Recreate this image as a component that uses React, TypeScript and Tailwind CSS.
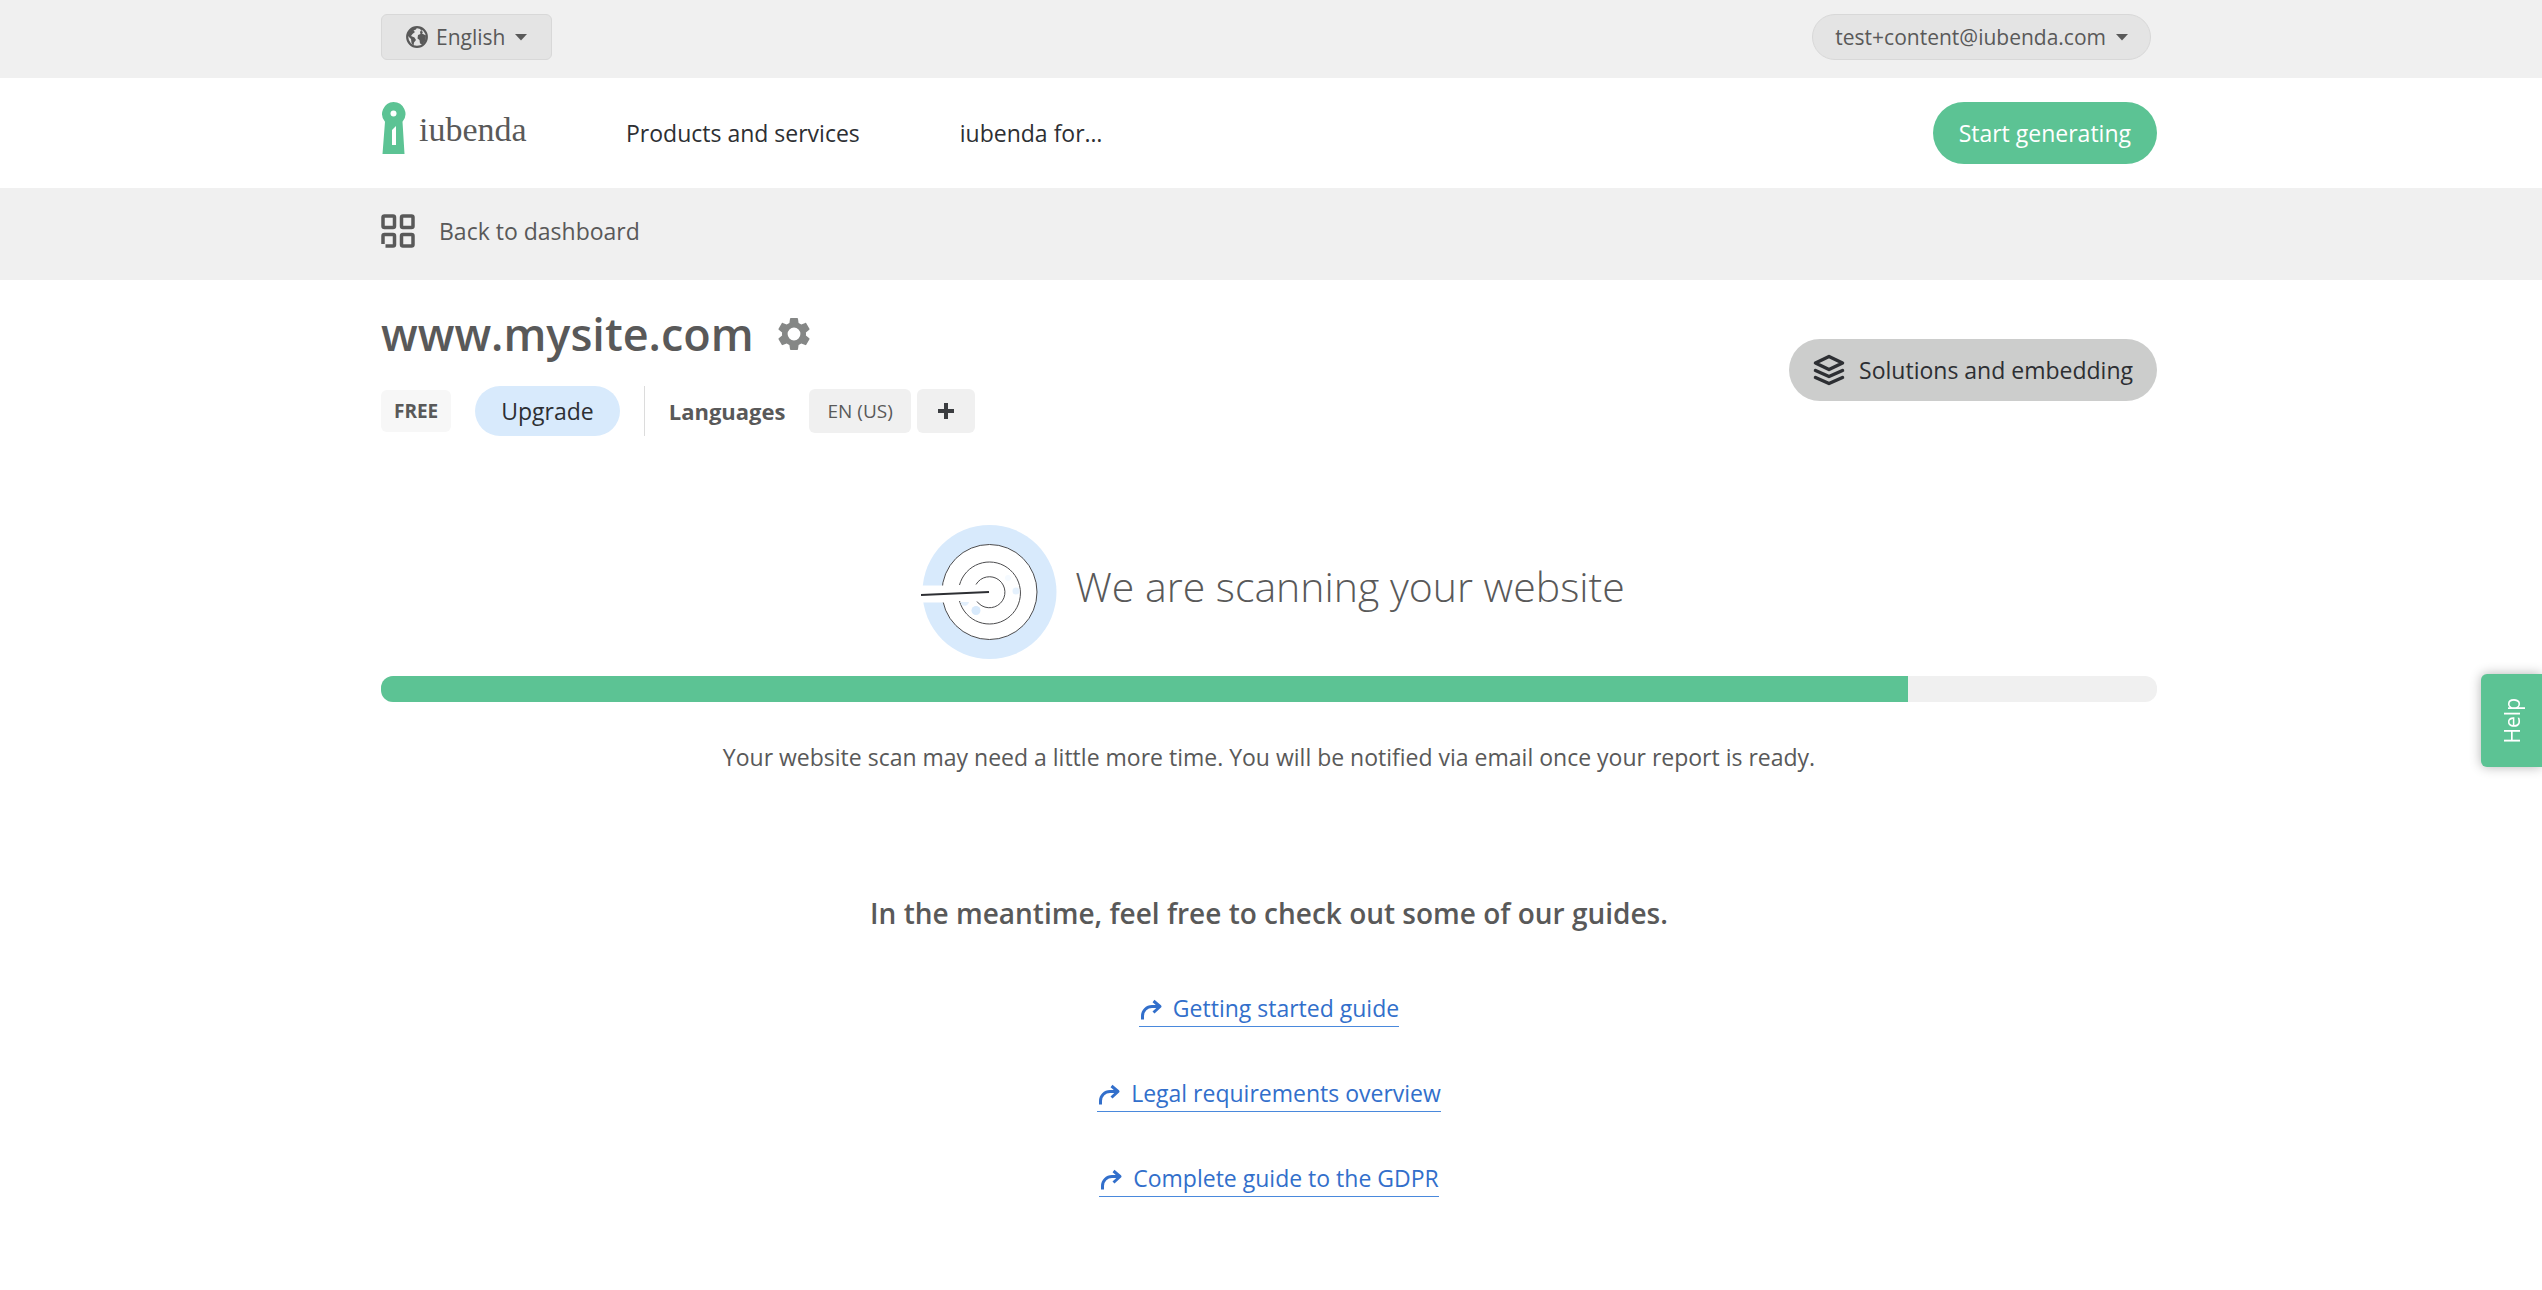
import type { ReactNode } from 'react';

const GUIDES = ['Getting started guide', 'Legal requirements overview', 'Complete guide to the GDPR'];
const SCAN_PROGRESS = 86;

function App() {
  return (
    <div className="min-h-screen bg-white font-['Open_Sans','Noto_Sans',sans-serif] text-[23px] leading-[30px] text-[#595959]">
      <div className="bg-[#f0f0f0]">
        <Container className="flex h-[78px] items-start justify-between pt-3.5">
          <button
            type="button"
            className="flex h-[46px] items-center rounded-md border border-[#d8d8d8] bg-[#e4e4e4] px-6 text-[21px]"
          >
            <GlobeIcon />
            English
            <Caret />
          </button>
          <button
            type="button"
            className="mr-1.5 flex h-[46px] items-center rounded-full border border-[#d8d8d8] bg-[#e4e4e4] px-[22px] text-[21px]"
          >
            test+content@iubenda.com
            <Caret />
          </button>
        </Container>
      </div>

      <header>
        <Container className="flex h-[110px] items-center">
          <a href="#" className="flex w-[245px] items-center pb-2.5">
            <KeyholeLogo />
            <span className="ml-3 pt-1 font-['Liberation_Serif',serif] text-[34px] leading-[40px]">iubenda</span>
          </a>
          <nav className="flex flex-1 gap-[100px] text-[#2d2f33]">
            <a href="#">Products and services</a>
            <a href="#">iubenda for…</a>
          </nav>
          <button type="button" className="h-[62px] rounded-full bg-[#5cc394] px-[26px] text-white">
            Start generating
          </button>
        </Container>
      </header>

      <div className="bg-[#f0f0f0]">
        <Container className="flex h-[92px] items-center pb-1.5">
          <a href="#" className="flex items-center gap-6">
            <DashboardIcon />
            Back to dashboard
          </a>
        </Container>
      </div>

      <main>
        <Container>
          <section className="flex items-start justify-between pt-6">
            <div>
              <div className="flex items-center gap-6">
                <h1 className="text-[45px] leading-[60px] font-semibold">www.mysite.com</h1>
                <button type="button" aria-label="Site settings">
                  <GearIcon />
                </button>
              </div>
              <div className="mt-[22px] flex items-center">
                <span className="rounded-md bg-[#f7f7f7] px-[13px] py-1.5 text-[19px] leading-[30px] font-bold">
                  FREE
                </span>
                <button type="button" className="ml-6 h-[50px] rounded-full bg-[#d8eafc] px-[26px] text-[#2d2f33]">
                  Upgrade
                </button>
                <div className="ml-6 flex h-[50px] items-center border-l border-[#dcdcdc] pl-6">
                  <span className="text-[22px] font-bold">Languages</span>
                  <button type="button" className="ml-6 h-11 rounded-md bg-[#f0f0f0] px-[18px] text-[19px]">
                    EN (US)
                  </button>
                  <button
                    type="button"
                    aria-label="Add language"
                    className="ml-1.5 flex h-11 w-[58px] items-center justify-center rounded-md bg-[#f0f0f0]"
                  >
                    <PlusIcon />
                  </button>
                </div>
              </div>
            </div>
            <button
              type="button"
              className="mt-[35px] flex h-[62px] items-center gap-3.5 rounded-full bg-[#cccdcc] px-6 text-[#2d2f33]"
            >
              <LayersIcon />
              Solutions and embedding
            </button>
          </section>

          <section className="mt-[88px] text-center">
            <div className="flex items-center justify-center gap-[18px] pl-2">
              <TargetIllustration />
              <h2 className="pb-3 text-[41px] leading-[56px] font-light">We are scanning your website</h2>
            </div>
            <div
              role="progressbar"
              aria-label="Website scan"
              aria-valuenow={SCAN_PROGRESS}
              className="mt-4 h-[26px] overflow-hidden rounded-[12px] bg-[#f0f0f0]"
            >
              <div className="h-full bg-[#5cc394]" style={{ width: `${SCAN_PROGRESS}%` }} />
            </div>
            <p className="mt-10">
              Your website scan may need a little more time. You will be notified via email once your report is ready.
            </p>
          </section>

          <section className="mt-[121px] text-center">
            <h3 className="text-[28px] leading-[40px] font-semibold">
              In the meantime, feel free to check out some of our guides.
            </h3>
            <ul className="mt-[60px] flex flex-col items-center gap-[51px]">
              {GUIDES.map((guide) => (
                <li key={guide}>
                  <a href="#" className="flex h-[34px] items-start gap-2.5 border-b border-[#4a89dc] text-[#326fcb]">
                    <ArrowIcon />
                    {guide}
                  </a>
                </li>
              ))}
            </ul>
          </section>
        </Container>
      </main>

      <button
        type="button"
        className="fixed top-[674px] right-0 flex h-[93px] w-[61px] items-center justify-center rounded-l-md bg-[#5cc394] text-[21px] text-white shadow-[0_0_12px_rgba(0,0,0,0.3)]"
      >
        <span className="rotate-180 [writing-mode:vertical-rl]">Help</span>
      </button>
    </div>
  );
}

function Container({ className = '', children }: { className?: string; children: ReactNode }) {
  return (
    <div className="pr-1">
      <div className={`mx-auto max-w-[1776px] ${className}`}>{children}</div>
    </div>
  );
}

function Caret() {
  return (
    <svg viewBox="0 0 12 7" className="ml-2.5 h-[7px] w-3" fill="currentColor">
      <path d="M0 0h12L6 6.500z" />
    </svg>
  );
}

function GlobeIcon() {
  return (
    <svg viewBox="0 0 22 22" className="mr-2 size-[22px]" fill="currentColor">
      <circle cx="11" cy="11" r="9.800" fill="none" stroke="currentColor" strokeWidth="2.200" />
      <path d="M2 7.500L6 2.500l5-1.500-1 2.500-2.500 1L9 6 6.500 8 5 10l3.500 1.500 1.500 2.500-2 2.500-.5 3.500L5.500 17 5 13 2 10z" />
      <path d="M13.500 1.500l2.500 2-.5 1.500 1.500 1-1 1.500 4 2-.5 5-3 4-2.500-1-.5-3.500-2-1.500.5-3.500L14.500 8l-.5-2 1-1.500z" />
    </svg>
  );
}

function KeyholeLogo() {
  return (
    <svg viewBox="0 0 26 52" className="h-[52px] w-[26px]">
      <path d="M12.500 0a12 12 0 0 1 9 19.800L23.500 52h-22L4 19.800A12 12 0 0 1 12.500 0z" fill="#5cc394" />
      <circle cx="12.500" cy="11.500" r="3" fill="#fff" />
      <path d="M15 24v19h-4V28z" fill="#fff" />
    </svg>
  );
}

function DashboardIcon() {
  return (
    <svg viewBox="0 0 34 34" className="size-[34px]" fill="none" stroke="currentColor" strokeWidth="3.500">
      <rect x="2" y="2" width="11.500" height="11.500" rx="1.500" />
      <rect x="20.500" y="2" width="11.500" height="11.500" rx="1.500" />
      <rect x="20.500" y="20.500" width="11.500" height="11.500" rx="1.500" />
      <path d="M2 30v-8a1.500 1.500 0 0 1 1.500-1.500H12a1.500 1.500 0 0 1 1.500 1.500v8.500A1.500 1.500 0 0 1 12 32H4.500" />
    </svg>
  );
}

function GearIcon() {
  return (
    <svg viewBox="2 2 20 20" className="size-8" fill="#858786">
      <path d="M19.430 12.980c.04-.32.07-.64.07-.98s-.03-.66-.07-.98l2.110-1.650c.19-.15.24-.42.12-.64l-2-3.460c-.12-.22-.39-.3-.61-.22l-2.490 1c-.52-.4-1.080-.73-1.690-.98l-.38-2.650C14.460 2.180 14.250 2 14 2h-4c-.25 0-.46.18-.49.42l-.38 2.650c-.61.25-1.170.59-1.690.98l-2.490-1c-.23-.09-.49 0-.61.22l-2 3.460c-.13.22-.07.49.12.64l2.110 1.650c-.04.32-.07.65-.07.98s.03.66.07.98l-2.110 1.650c-.19.15-.24.42-.12.64l2 3.460c.12.22.39.3.61.22l2.490-1c.52.4 1.080.73 1.690.98l.38 2.650c.03.24.24.42.49.42h4c.25 0 .46-.18.49-.42l.38-2.650c.61-.25 1.170-.59 1.690-.98l2.490 1c.23.09.49 0 .61-.22l2-3.460c.12-.22.07-.49-.12-.64l-2.110-1.650zM12 16a4 4 0 1 1 0-8 4 4 0 0 1 0 8z" />
    </svg>
  );
}

function PlusIcon() {
  return (
    <svg viewBox="0 0 18 18" className="size-[18px]" stroke="#3b3d40" strokeWidth="4">
      <path d="M9 1v16M1 9h16" />
    </svg>
  );
}

function LayersIcon() {
  return (
    <svg
      viewBox="0 0 32 32"
      className="size-8"
      fill="none"
      stroke="currentColor"
      strokeWidth="3.500"
      strokeLinecap="round"
      strokeLinejoin="round"
    >
      <path d="M16 2.500L29.500 9 16 15.500 2.500 9z" />
      <path d="M2.500 16.500L16 22.500l13.500-6" />
      <path d="M2.500 23.500L16 29.500l13.500-6" />
    </svg>
  );
}

function ArrowIcon() {
  return (
    <svg
      viewBox="0 0 24 24"
      className="mt-1 size-6"
      fill="none"
      stroke="currentColor"
      strokeWidth="3"
      strokeLinejoin="round"
    >
      <path d="M3.500 22.500v-3.500a9.500 9.500 0 0 1 9.500-9.500h8" />
      <path d="M14.500 4l6.500 5.500-6.500 6" />
    </svg>
  );
}

// Dart board with the dart coming in from the left
function TargetIllustration() {
  return (
    <svg viewBox="0 0 136 136" className="size-[136px]" fill="none">
      <circle cx="68.500" cy="68" r="67" fill="#d8eafc" />
      <circle cx="68.500" cy="68" r="47.500" fill="#fff" stroke="#4b4b4d" />
      <path d="M0 61.500h30v17H0z" fill="#fff" />
      <path d="M38.500 61a31 31 0 1 1 0 16" stroke="#4b4b4d" />
      <path d="M55 60.500a15.500 15.500 0 1 1 1 17" stroke="#4b4b4d" />
      <circle cx="55" cy="86.500" r="4.500" fill="#d8eafc" />
      <path d="M39 78h9a4.500 4.500 0 0 1-7 3z" fill="#e2effc" />
      <circle cx="95" cy="67" r="3.500" fill="#e5f1fd" />
      <circle cx="87" cy="54" r="3" fill="#f5faff" />
      <path d="M0 71l68-3" stroke="#2d2f33" strokeWidth="2" />
    </svg>
  );
}

export default App;
